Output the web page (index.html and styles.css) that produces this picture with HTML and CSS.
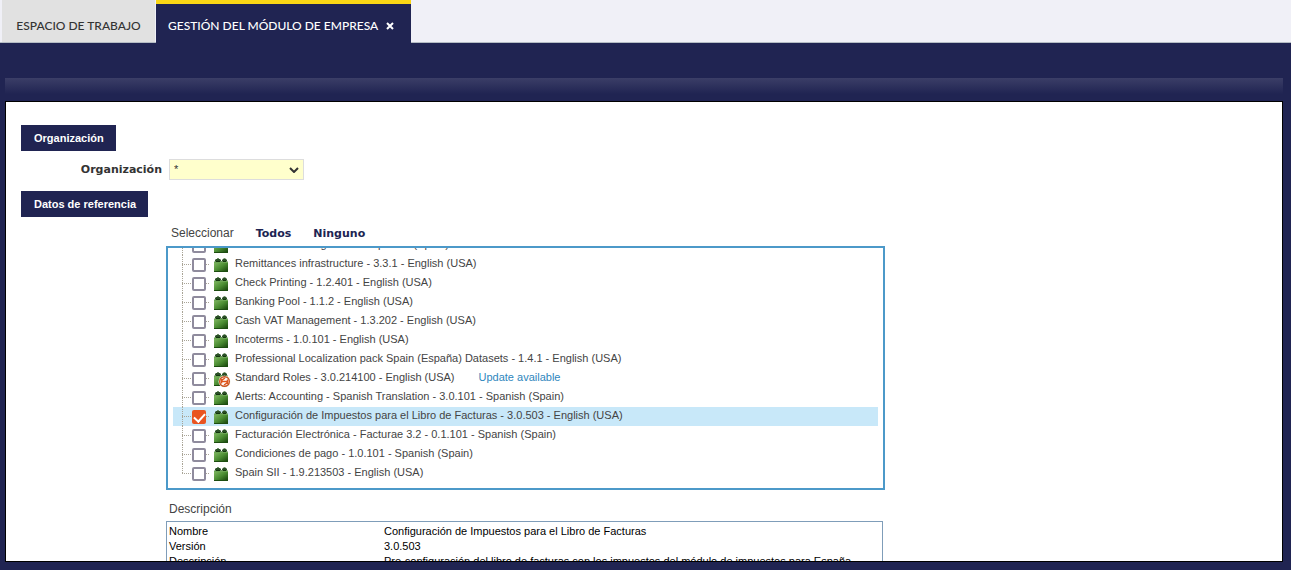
FILE: index.html
```html
<!DOCTYPE html>
<html lang="es">
<head>
<meta charset="utf-8">
<title>Gestión del Módulo de Empresa</title>
<link rel="stylesheet" href="styles.css">
</head>
<body>
<svg class="defs" aria-hidden="true">
  <defs>
    <linearGradient id="face" x1="0" y1="0" x2="1" y2="1">
      <stop offset="0" stop-color="#83b964"/><stop offset=".5" stop-color="#4a8c32"/><stop offset="1" stop-color="#123d08"/>
    </linearGradient>
    <symbol id="module" viewBox="0 0 14 14">
      <path d="M1 3h12l1 1H0z" fill="#5f8a54"/>
      <path d="M2 1h4l1 1v1H1V2zM9 1h3l1 1v1H8V2z" fill="#2a4f26"/>
      <path d="M3 .5h2M9.500 .5h2" stroke="#6f8f68"/>
      <path d="M0 4h14v10H0z" fill="url(#face)"/>
      <path d="M2 3.500h4M9 3.500h3" stroke="#12330d"/>
      <path d="M0 4.500h14" stroke="#6ba653"/>
      <path d="M0 13.500h14" stroke="#1c4d10"/>
    </symbol>
  </defs>
</svg>
<nav class="tabs" role="tablist">
  <button class="tab" role="tab" aria-selected="false">ESPACIO DE TRABAJO</button>
  <button class="tab tab-active" role="tab" aria-selected="true">GESTIÓN DEL MÓDULO DE EMPRESA
    <svg class="close" viewBox="0 0 8 8" aria-hidden="true"><path d="M1 1l6 6M7 1L1 7"/></svg>
  </button>
</nav>
<main class="workspace">
  <div class="toolbar"></div>
  <form class="panel">
    <h2 class="section">Organización</h2>
    <div class="field">
      <label class="label" for="org">Organización</label>
      <span class="select-box">
        <select class="select" id="org"><option>*</option></select>
        <svg class="chevron" viewBox="0 0 10 6" aria-hidden="true"><path d="M1 1l4 4 4-4"/></svg>
      </span>
    </div>
    <h2 class="section">Datos de referencia</h2>
    <div class="reference">
      <div class="choose"><span>Seleccionar</span><a class="pick" href="#todos">Todos</a><a class="pick" href="#ninguno">Ninguno</a></div>
      <div class="tree">
        <label class="row"><input class="check" type="checkbox"><svg class="icon"><use href="#module"/></svg><span>Advanced Banking - 1.0.1 - Spanish (Spain)</span></label>
        <label class="row"><input class="check" type="checkbox"><svg class="icon"><use href="#module"/></svg><span>Remittances infrastructure - 3.3.1 - English (USA)</span></label>
        <label class="row"><input class="check" type="checkbox"><svg class="icon"><use href="#module"/></svg><span>Check Printing - 1.2.401 - English (USA)</span></label>
        <label class="row"><input class="check" type="checkbox"><svg class="icon"><use href="#module"/></svg><span>Banking Pool - 1.1.2 - English (USA)</span></label>
        <label class="row"><input class="check" type="checkbox"><svg class="icon"><use href="#module"/></svg><span>Cash VAT Management - 1.3.202 - English (USA)</span></label>
        <label class="row"><input class="check" type="checkbox"><svg class="icon"><use href="#module"/></svg><span>Incoterms - 1.0.101 - English (USA)</span></label>
        <label class="row"><input class="check" type="checkbox"><svg class="icon"><use href="#module"/></svg><span>Professional Localization pack Spain (España) Datasets - 1.4.1 - English (USA)</span></label>
        <div class="row"><input class="check" type="checkbox" id="roles"><svg class="icon" viewBox="0 0 14 14"><use href="#module" width="14" height="14"/><circle cx="10.500" cy="9.500" r="6" fill="#eef3e8"/><circle cx="10.500" cy="9.500" r="4.800" fill="#fff" stroke="#c9501c" stroke-width="1.400"/><path d="M7.500 11.500V8.500L11 6M7.500 6.800v2.700h3M13.500 7.500v3L10 13M13.500 12.200V9.500h-3" fill="none" stroke="#e0561c" stroke-width="1.500"/></svg><label for="roles">Standard Roles - 3.0.214100 - English (USA)</label><a class="update" href="#update">Update available</a></div>
        <label class="row"><input class="check" type="checkbox"><svg class="icon"><use href="#module"/></svg><span>Alerts: Accounting - Spanish Translation - 3.0.101 - Spanish (Spain)</span></label>
        <label class="row row-selected"><input class="check" type="checkbox" checked><svg class="icon"><use href="#module"/></svg><span>Configuración de Impuestos para el Libro de Facturas - 3.0.503 - English (USA)</span></label>
        <label class="row"><input class="check" type="checkbox"><svg class="icon"><use href="#module"/></svg><span>Facturación Electrónica - Facturae 3.2 - 0.1.101 - Spanish (Spain)</span></label>
        <label class="row"><input class="check" type="checkbox"><svg class="icon"><use href="#module"/></svg><span>Condiciones de pago - 1.0.101 - Spanish (Spain)</span></label>
        <label class="row"><input class="check" type="checkbox"><svg class="icon"><use href="#module"/></svg><span>Spain SII - 1.9.213503 - English (USA)</span></label>
      </div>
      <h3 class="caption">Descripción</h3>
      <div class="details">
        <table class="facts">
          <tr><th scope="row">Nombre</th><td>Configuración de Impuestos para el Libro de Facturas</td></tr>
          <tr><th scope="row">Versión</th><td>3.0.503</td></tr>
          <tr><th scope="row">Descripción</th><td>Pre-configuración del libro de facturas con los impuestos del módulo de impuestos para España</td></tr>
        </table>
      </div>
    </div>
  </form>
</main>
</body>
</html>
```
FILE: styles.css
```css
* { box-sizing: border-box; }
body {
  margin: 0;
  height: 100vh;
  display: flex;
  flex-direction: column;
  background: #202452;
  font: 11px/15px "Liberation Sans", Arial, sans-serif;
  color: #444;
}
.defs { position: absolute; width: 0; height: 0; }
.tabs {
  display: flex;
  height: 43px;
  padding-left: 2px;
  background: #f0f0f7;
  box-shadow: inset 0 -1px #b4bcc4;
}
.tab {
  display: flex;
  align-items: center;
  justify-content: center;
  min-width: 153px;
  padding: 8px 12px 0;
  border: 0;
  margin-right: 1px;
  background: #e1e1e1;
  box-shadow: inset 0 -1px #b4bcc4;
  color: #333;
  font: 500 12px/20px Lato, sans-serif;
}
.tab-active {
  justify-content: space-between;
  min-width: 255px;
  padding: 4px 17px 0 12px;
  margin: 0;
  border-top: 4px solid #fad615;
  background: #202452;
  box-shadow: none;
  color: #fff;
}
.close { width: 8px; height: 8px; fill: none; stroke: #fff; stroke-width: 2; }
.workspace {
  flex: 1;
  min-height: 0;
  display: flex;
  flex-direction: column;
  padding: 35px 8px 8px 5px;
}
.toolbar {
  flex: none;
  height: 23px;
  background: linear-gradient(#3b3e67, #202452 16px);
}
.panel {
  flex: 1;
  min-height: 0;
  overflow: hidden;
  border: 1px solid #000;
  background: #fff;
  padding: 23px 15px 0;
}
.section {
  width: fit-content;
  margin: 0;
  padding: 0 12px 0 13px;
  background: #202452;
  color: #fff;
  font-size: 11px;
  font-weight: bold;
  line-height: 26px;
}
.field {
  display: flex;
  align-items: center;
  gap: 7px;
  height: 40px;
  padding-bottom: 3px;
}
.label {
  width: 141px;
  text-align: right;
  color: #333;
  font: bold 11px/15px "DejaVu Sans", sans-serif;
}
.select-box { position: relative; width: 135px; height: 21px; }
.select {
  appearance: none;
  width: 100%;
  height: 100%;
  padding: 0 4px;
  border: 1px solid #ddd;
  border-radius: 0;
  background: #ffffcc;
  color: #333;
  font: inherit;
}
.chevron {
  position: absolute;
  right: 5px;
  top: 8px;
  width: 10px;
  height: 6px;
  fill: none;
  stroke: #333;
  stroke-width: 2;
  pointer-events: none;
}
.reference { width: 719px; margin: 8px 0 0 145px; }
.choose {
  display: flex;
  align-items: baseline;
  gap: 22px;
  padding: 0 5px;
  height: 21px;
  line-height: 16px;
  font-size: 12px;
}
.pick {
  color: #202452;
  font: bold 11px/16px "DejaVu Sans", sans-serif;
  text-decoration: none;
}
.tree {
  display: flex;
  flex-direction: column;
  justify-content: flex-end;
  height: 244px;
  padding: 5px;
  border: 2px solid #4c99c9;
  overflow: hidden;
}
.row {
  flex: none;
  display: flex;
  height: 19px;
  line-height: 17px;
  padding-left: 9px;
  background:
    repeating-linear-gradient(to bottom, #a9a496 0 1px, transparent 1px 2px) 9px 0 / 1px 100% no-repeat,
    repeating-linear-gradient(to right, #a9a496 0 1px, transparent 1px 2px) 9px 9px / 28px 1px no-repeat;
}
.row:last-child { background-size: 1px 10px, 28px 1px; }
.row-selected { background-color: #c8e8f9; }
.check {
  appearance: none;
  flex: none;
  width: 14px;
  height: 14px;
  margin: 3px 8px 0 10px;
  border: 2px solid #8f8b9d;
  border-radius: 2px;
  background: #fff;
}
.check:checked {
  border: 0;
  background: #e95420;
  display: grid;
  place-content: center;
  padding-bottom: 2px;
}
.check:checked::before {
  content: "";
  width: 5px;
  height: 9px;
  border: solid #fff;
  border-width: 0 2px 2px 0;
  transform: rotate(42deg);
}
.icon { flex: none; width: 14px; height: 14px; margin: 3px 7px 0 0; overflow: visible; }
.update { margin-left: 24px; color: #2e86bd; text-decoration: none; }
.caption {
  margin: 12px 0 4px;
  padding-left: 3px;
  font-size: 12px;
  font-weight: normal;
  line-height: 15px;
}
.details {
  width: 717px;
  height: 100px;
  border: 1px solid #7f9db9;
  padding: 2px;
  color: #000;
}
.facts { width: 100%; border-collapse: collapse; }
.facts th { width: 215px; padding: 0; text-align: left; font-weight: normal; }
.facts td { padding: 0; }
```
